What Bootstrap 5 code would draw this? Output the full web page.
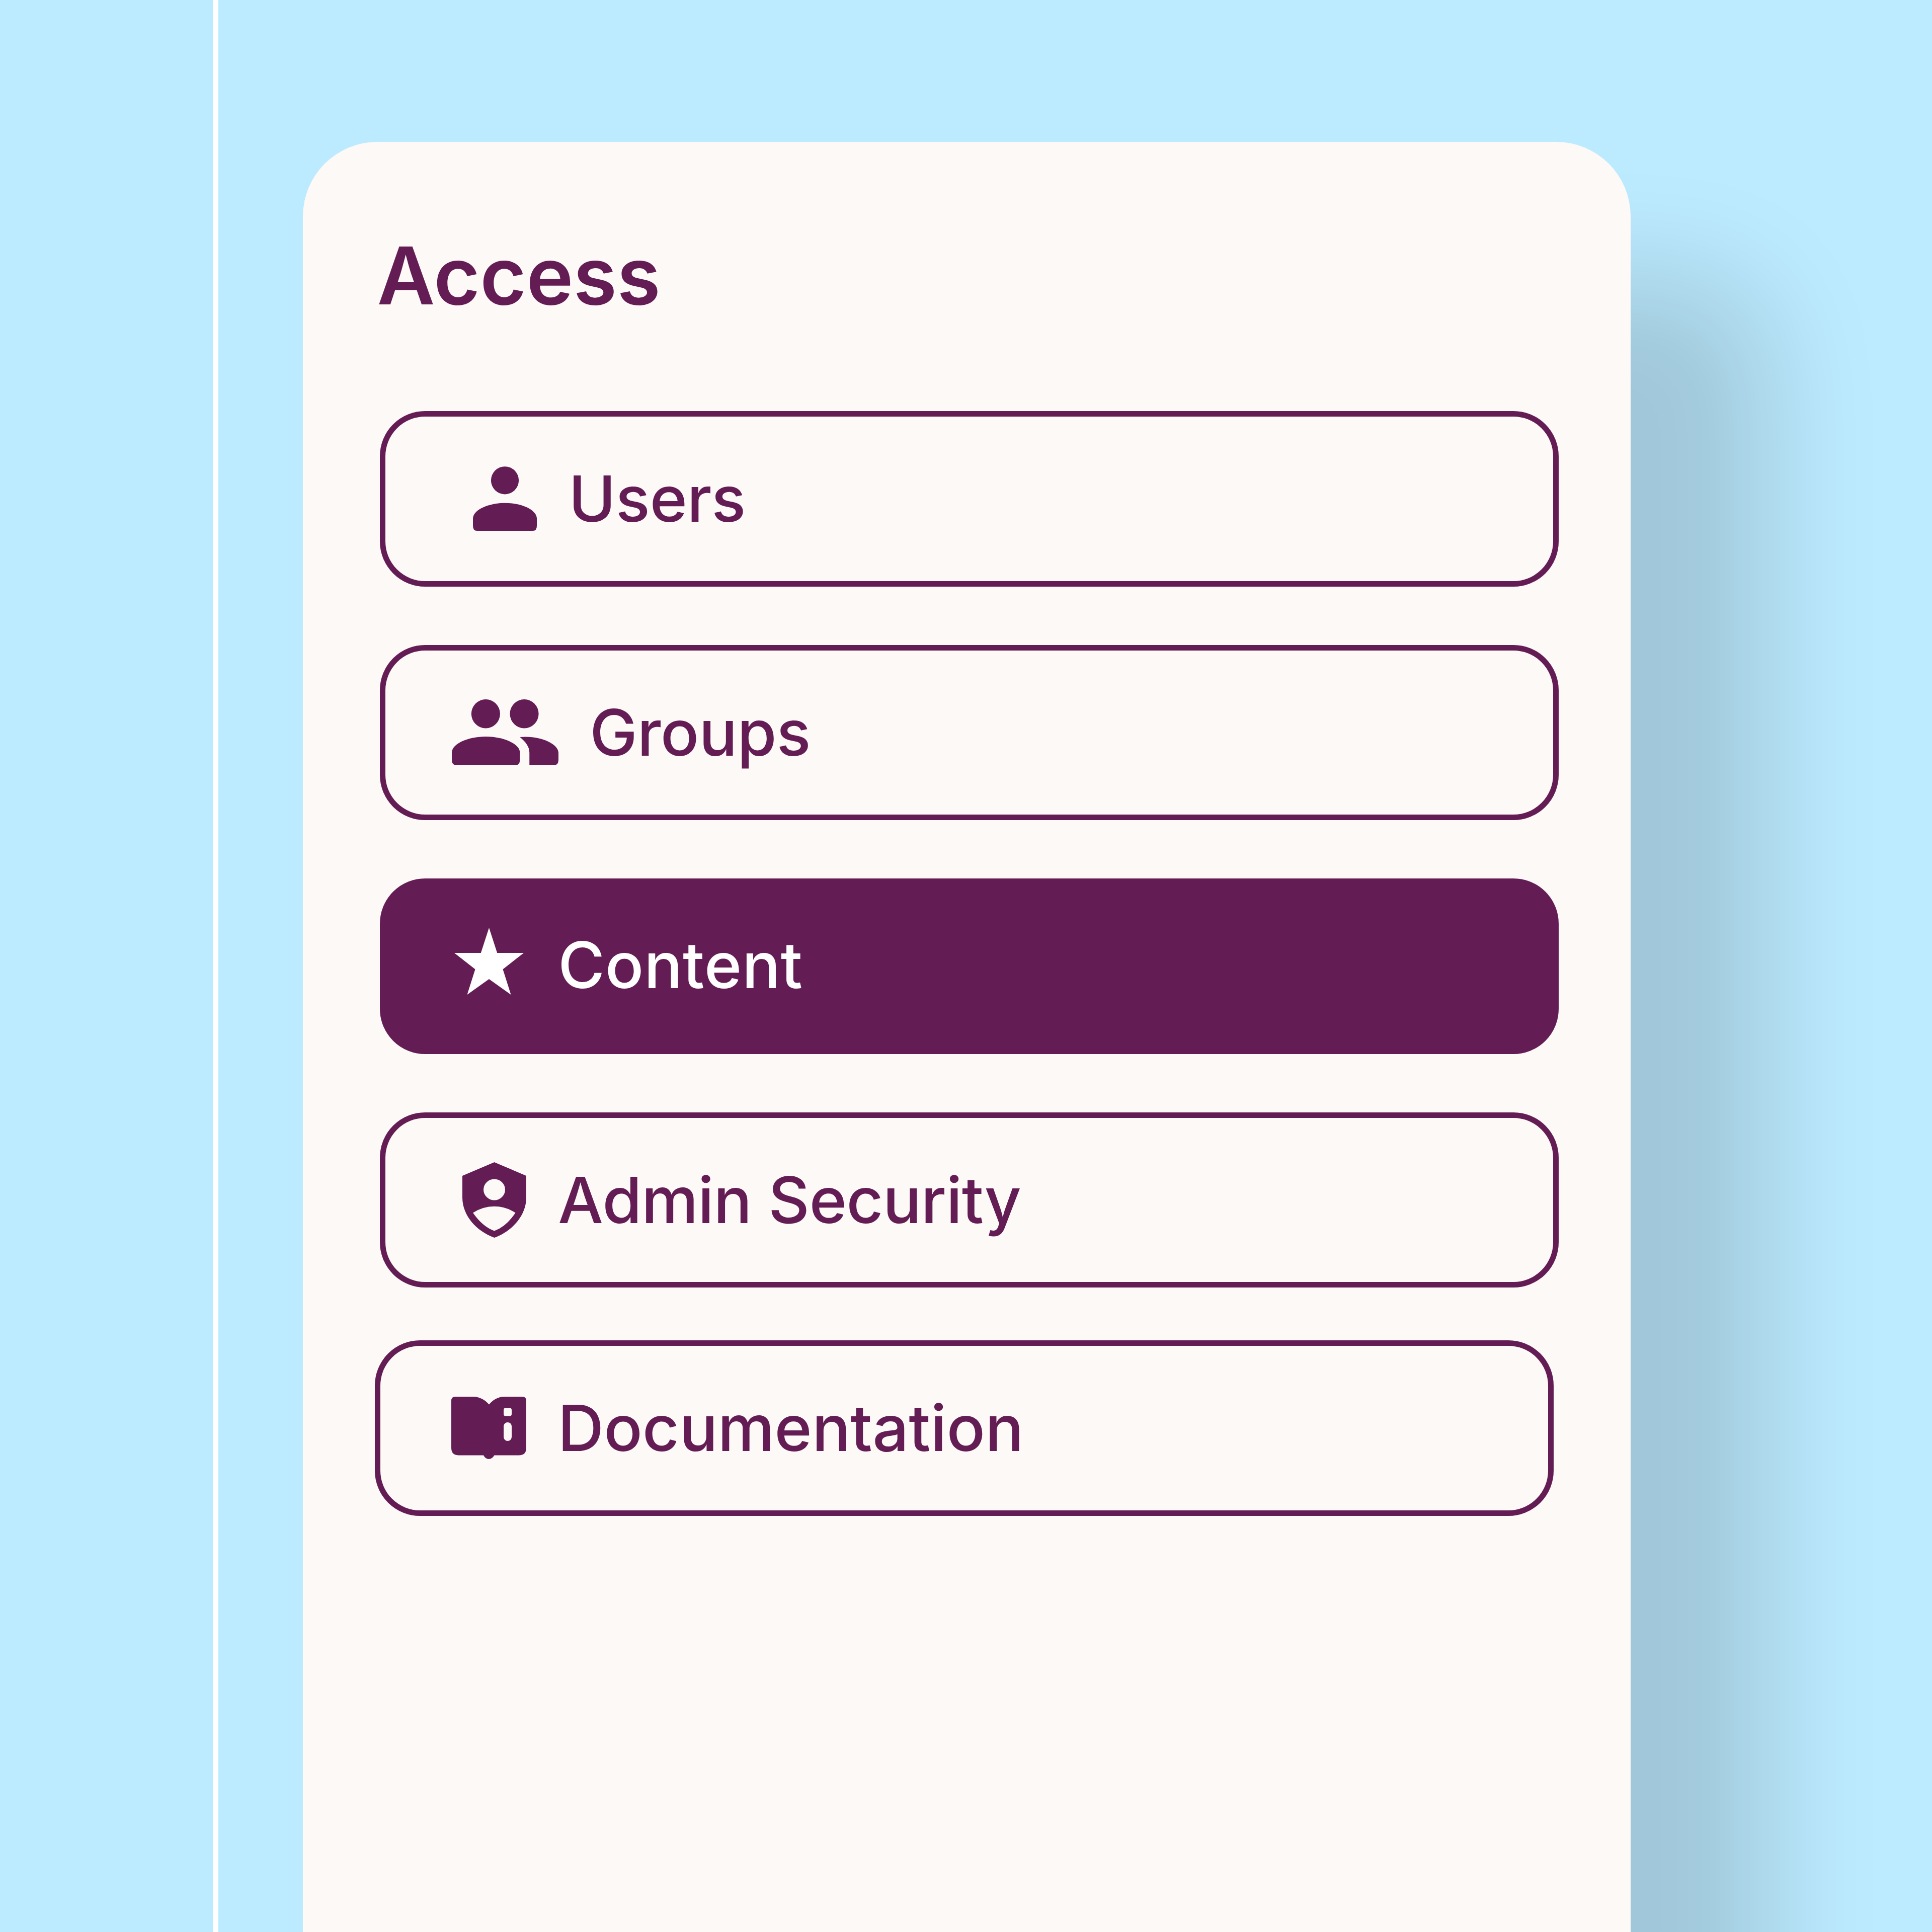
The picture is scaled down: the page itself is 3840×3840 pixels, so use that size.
<!DOCTYPE html>
<html lang="en">
<head>
    <meta charset="utf-8">
    <title>Access</title>
    <link href="https://cdn.jsdelivr.net/npm/bootstrap@5.3.0/dist/css/bootstrap.min.css" rel="stylesheet">
    <style>
        body {
            background-color: #bceaff;
            color: #641c54;
            font-family: Inter, "Liberation Sans", sans-serif;
        }

        .rail {
            width: 433.5px;
            border-right: 11px solid #fff;
        }

        .access-card {
            width: 2638.5px;
            margin-top: 282px;
            margin-left: 168.5px;
            padding: 170px 142.5px 0 153px;
            background-color: #fcf9f6;
            border: 0;
            border-radius: 148px 148px 0 0;
            box-shadow: 268px 275px 228px rgba(0, 0, 0, .15);
            color: inherit;
        }

        .access-title {
            margin: 0 0 174px -5.5px;
            font-size: 158px;
            font-weight: 600;
            line-height: 191px;
        }

        .access-list {
            gap: 116px;
        }

        .access-btn {
            width: 2343px;
            height: 348.5px;
            padding: 0 0 0 131.5px;
            border: 11px solid #641c54;
            border-radius: 90px;
            color: #641c54;
            font-size: 127px;
            font-weight: 500;
            line-height: 1.2;
        }

        .access-btn svg {
            fill: currentColor;
        }

        .access-btn.active {
            background-color: #641c54;
            border-color: #641c54;
            color: #fff;
            letter-spacing: .6px;
        }

        .btn-users {
            letter-spacing: -.5px;
        }

        .btn-groups {
            letter-spacing: -.4px;
        }

        .btn-admin {
            letter-spacing: -.75px;
        }

        .btn-docs {
            margin: -11px 0 0 -10.5px;
        }
    </style>
</head>
<body class="d-flex vh-100 overflow-hidden">
    <div class="rail flex-shrink-0"></div>

    <div class="card access-card flex-shrink-0">
        <h1 class="access-title">Access</h1>

        <div class="access-list d-flex flex-column">
            <button class="btn access-btn btn-users d-flex align-items-center" type="button">
                <svg width="127" height="128" viewBox="0 0 127 128" style="margin: 0 63px 0 42.5px">
                    <circle cx="63.5" cy="27.8" r="27.6"/>
                    <path d="M0 104C0 86 31 72.7 63.5 72.7S127 86 127 104v14q0 10-8 10H8q-8 0-8-10z"/>
                </svg>
                Users
            </button>

            <button class="btn access-btn btn-groups d-flex align-items-center" type="button">
                <svg width="212" height="131" viewBox="0 0 213 131" preserveAspectRatio="none" style="margin-right: 62.5px">
                    <circle cx="67.7" cy="28.7" r="28.7"/>
                    <circle cx="144.7" cy="28.7" r="28.7"/>
                    <path d="M0 106C0 88 33 74 67.7 74S136 88 136 106v14q0 11-9 11H9q-9 0-9-11z"/>
                    <path d="M136 75C175 71 213 88 213 106v14q0 11-9 11h-49v-25c0-12-8-22-19-31z"/>
                </svg>
                Groups
            </button>

            <button class="btn access-btn active d-flex align-items-center" type="button">
                <svg width="138" height="152" viewBox="0 0 138 152" style="margin: 0 68.5px 0 5px">
                    <path d="M69 0L85.2 50H138L96.5 82.5 112.5 133 69 102 25.5 133 41.5 82.5 0 50H52.8z"/>
                </svg>
                <span class="pb-1">Content</span>
            </button>

            <button class="btn access-btn btn-admin d-flex align-items-center" type="button">
                <svg width="127" height="150" viewBox="0 0 127 150" style="margin: 0 63.5px 0 21px">
                    <path fill-rule="evenodd" d="M63.5 0L127 27V70C127 106 99 137 63.5 150 28 137 0 106 0 70V27zM63.5 33.5a21.5 21 0 1 0 0 42 21.5 21 0 1 0 0-42zM21 100.5Q40 128 63.5 136.5 87 128 105.5 100.5 86 87.8 63.5 87.8T21 100.5z"/>
                </svg>
                Admin Security
            </button>

            <button class="btn access-btn btn-docs d-flex align-items-center" type="button">
                <svg width="149" height="124" viewBox="0 0 149 124" style="margin: 0 62.5px 0 10px">
                    <path fill-rule="evenodd" d="M8 0H44C56 0 68 7 75 15.5 82 7 93 0 105 0H141Q149 0 149 8V102Q149 116.5 134 116.5H85.5Q81 124 74.5 124T64 116.5H15Q0 116.5 0 102V8Q0 0 8 0zM108 22.5q-4 0-4 4v8q0 4 4 4h8q4 0 4-4v-8q0-4-4-4zM104 59v21a8 8 0 0 0 16 0v-21a8 8 0 0 0-16 0z"/>
                </svg>
                Documentation
            </button>
        </div>
    </div>

    <script src="https://cdn.jsdelivr.net/npm/bootstrap@5.3.0/dist/js/bootstrap.bundle.min.js"></script>
</body>
</html>
